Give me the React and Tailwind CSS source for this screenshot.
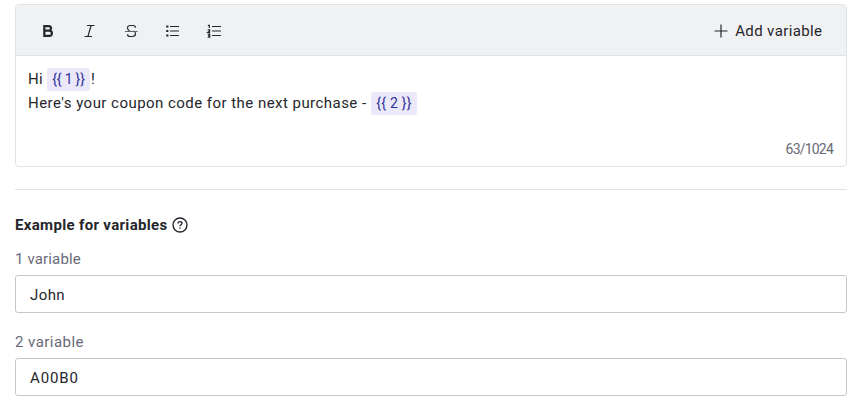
import React from 'react';

function ToolButton({ label, children }) {
  return (
    <button aria-label={label} className="flex h-6 w-[41.5px] items-center justify-center">
      <svg width="16" height="16" viewBox="0 0 16 16" fill="none" stroke="#25262c" strokeWidth="1.2">
        {children}
      </svg>
    </button>
  );
}

function Variable({ children, className }) {
  return (
    <span className={`inline-flex h-[23px] items-center justify-center rounded-[3px] bg-[#ebe9f9] text-sm text-[#30309c] ${className}`}>
      {children}
    </span>
  );
}

function Field({ label, value, labelClass, valueClass }) {
  return (
    <div>
      <div className="flex h-6 items-center text-[15px] text-[#686a78]"><span className={labelClass}>{label}</span></div>
      <div className="mt-[4px] flex h-[38px] items-center rounded-[3px] border border-[#c6c6d0] px-[14px] pt-[2px] text-[15px]">
        <span className={valueClass}>{value}</span>
      </div>
    </div>
  );
}

export default function App() {
  return (
    <main className="h-[404px] w-[860px] bg-white pt-1 pr-[13px] pl-[15px] font-[Roboto,sans-serif] text-[15px] text-[#25262c]">
      <section className="h-[163px] rounded-[4px] border border-[#e1e2e6]">
        <header className="flex h-[51px] items-center justify-between rounded-t-[3px] border-b border-[#e1e2e6] bg-[#f0f1f3] pt-[2px] pr-6 pl-[11px]">
          <div className="flex">
            <ToolButton label="Bold">
              <path d="M4.3 3.1h4.4a2.2 2.2 0 0 1 0 4.6H4.3M4.3 7.7h5a2.5 2.5 0 0 1 0 5.2h-5M4.3 2v12" strokeWidth="2.2" />
            </ToolButton>
            <ToolButton label="Italic">
              <path d="M6 2.5h7.5M3.5 13.5h7.5M10.1 2.5l-3.2 11" />
            </ToolButton>
            <ToolButton label="Strikethrough">
              <path d="M12.5 4.8c0-1.5-1-2.3-2.6-2.3H7.4C5.5 2.5 4.5 3.4 4.5 5s.8 2.4 2.3 3M4.5 11.2c0 1.6 1 2.3 2.6 2.3h2.3c2 0 3.1-.9 3.1-2.7 0-1.6-.8-2.5-2-2.8" />
              <path d="M2 8.5h12.5" stroke="#606168" strokeWidth="1" />
            </ToolButton>
            <ToolButton label="Bulleted list">
              <path d="M6 3.5h9M6 8h9M6 12.5h9" />
              <path d="M2.2 3.5h2.2M2.2 8h2.2M2.2 12.5h2.2" strokeWidth="2.2" />
            </ToolButton>
            <ToolButton label="Numbered list">
              <path d="M6 3.5h9M6 8h9M6 12.5h9" />
              <path d="M1.9 2.3h1.4V5M1.7 6.8h2v1.1L1.9 9.3h2.2M1.7 11.2h2v3h-2M2.2 12.7h1.5" strokeWidth="1.2" />
            </ToolButton>
          </div>
          <button className="-mr-[0.4px] flex items-center gap-[7px]">
            <svg width="14" height="14" viewBox="0 0 14 14" fill="none" stroke="#25262c" strokeWidth="1.2">
              <path d="M.5 7h13M7 .5v13" />
            </svg>
            <span className="tracking-[0.38px]">Add variable</span>
          </button>
        </header>
        <div className="px-3 pt-[11px]">
          <div className="flex h-6 items-center">
            <span className="w-[19px] tracking-[0.3px]">Hi</span>
            <Variable className="w-[43px] tracking-[-0.2px]">{'{{ 1 }}'}</Variable>
            <span className="ml-px">!</span>
          </div>
          <div className="flex h-6 items-center">
            <span className="w-[343px] whitespace-nowrap tracking-[0.46px]">Here's your coupon code for the next purchase -</span>
            <Variable className="w-[46px] tracking-[0.25px]">{'{{ 2 }}'}</Variable>
          </div>
        </div>
        <div className="mt-[24px] flex h-5 items-center justify-end pr-[13px] text-sm tracking-[-0.8px] text-[#686a78]">63/1024</div>
      </section>
      <hr className="mt-[22px] border-[#e1e2e6]" />
      <h2 className="mt-[23px] flex h-6 items-center gap-[4px] font-bold">
        <span className="tracking-[0.33px]">Example for variables</span>
        <svg width="16" height="16" viewBox="0 0 16 16" fill="none" stroke="#25262c" strokeWidth="1.4">
          <circle cx="8" cy="8" r="7" />
          <path d="M6 6.4c0-1.2.8-1.8 2-1.8s2 .7 2 1.7c0 1.4-2 1.5-2 3" />
          <path d="M8 10.4v1.3" />
        </svg>
      </h2>
      <div className="mt-[10px] flex flex-col gap-[17px]">
        <Field label="1 variable" value="John" labelClass="tracking-[0.15px]" valueClass="tracking-[0.4px]" />
        <Field label="2 variable" value="A00B0" labelClass="tracking-[0.46px]" valueClass="tracking-[0.9px]" />
      </div>
    </main>
  );
}
